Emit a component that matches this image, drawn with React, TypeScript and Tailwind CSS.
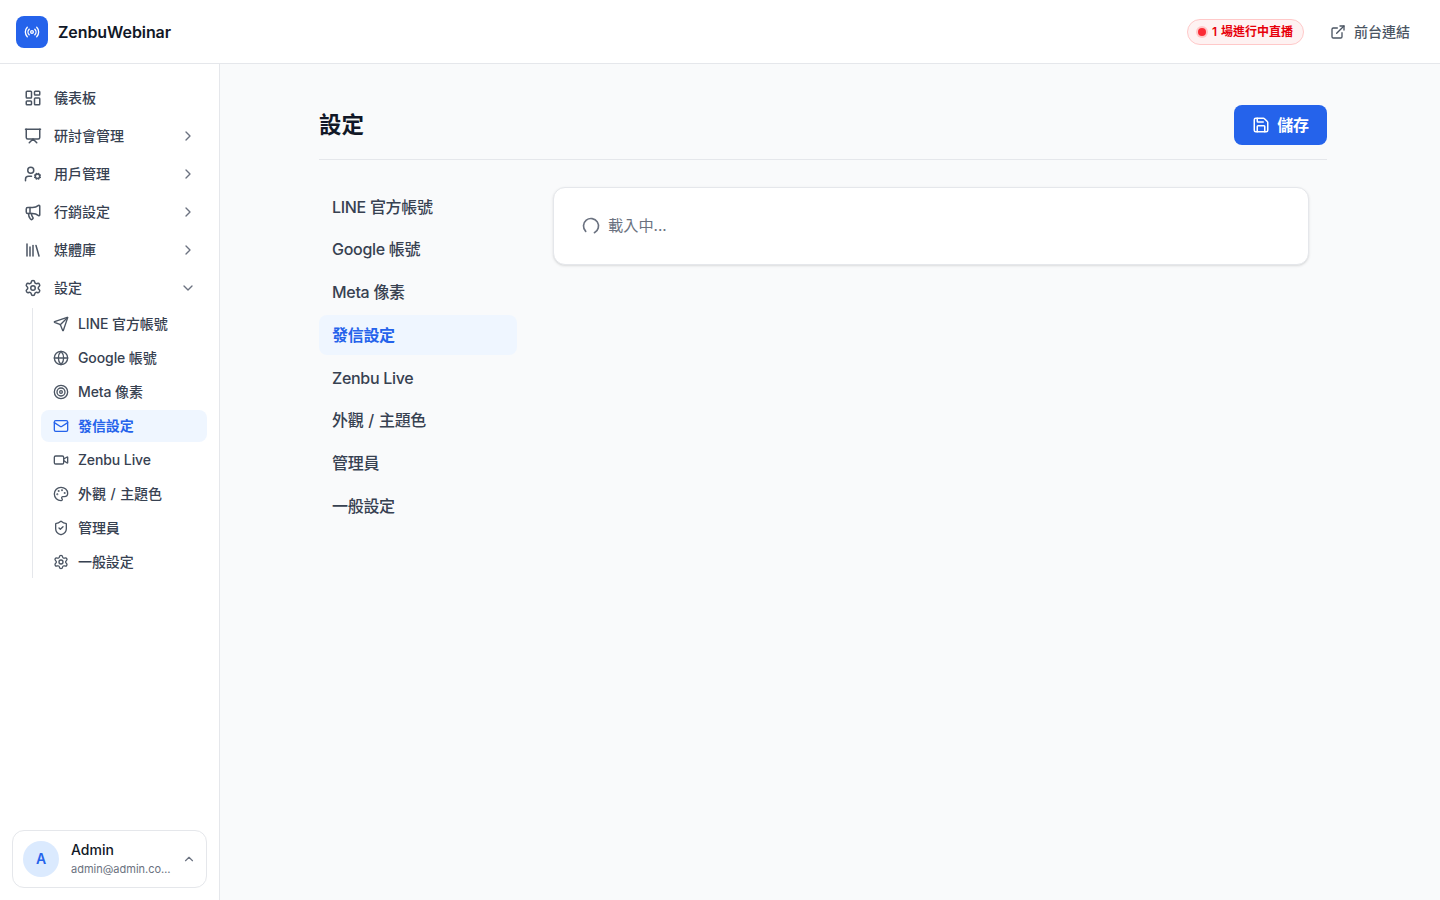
import React from "react";
import {
  LayoutDashboard, Presentation, UserCog, Megaphone, Library, Settings, Send, Globe, Target, Mail, Video, Palette,
  ShieldCheck, Radio, ExternalLink, Save, LoaderCircle, ChevronRight, ChevronDown, ChevronUp,
} from "lucide-react";

const font = "font-['Inter','Noto_Sans_CJK_TC',sans-serif]";

const mainNav = [
  { label: "儀表板", icon: LayoutDashboard },
  { label: "研討會管理", icon: Presentation, chev: "r" },
  { label: "用戶管理", icon: UserCog, chev: "r" },
  { label: "行銷設定", icon: Megaphone, chev: "r" },
  { label: "媒體庫", icon: Library, chev: "r" },
  { label: "設定", icon: Settings, chev: "d" },
];

const subNav = [
  { label: "LINE 官方帳號", icon: Send },
  { label: "Google 帳號", icon: Globe },
  { label: "Meta 像素", icon: Target },
  { label: "發信設定", icon: Mail, active: true },
  { label: "Zenbu Live", icon: Video },
  { label: "外觀 / 主題色", icon: Palette, wide: true },
  { label: "管理員", icon: ShieldCheck },
  { label: "一般設定", icon: Settings },
];

const tabs = [
  { label: "LINE 官方帳號" },
  { label: "Google 帳號" },
  { label: "Meta 像素" },
  { label: "發信設定", active: true },
  { label: "Zenbu Live" },
  { label: "外觀 / 主題色", wide: true },
  { label: "管理員" },
  { label: "一般設定" },
];

export default function App() {
  return (
    <div className={`${font} h-[900px] w-[1440px] overflow-hidden flex flex-col bg-[#f9fafb] text-[#111827]`}>
      <header className="h-16 shrink-0 bg-white border-b border-[#e5e7eb] flex items-center justify-between pl-4 pr-[30px]">
        <div className="flex items-center gap-2.5">
          <div className="w-8 h-8 rounded-lg bg-[#2563eb] flex items-center justify-center">
            <Radio size={16} className="text-white" strokeWidth={2} />
          </div>
          <span className="text-base font-semibold tracking-[-0.08px] text-[#111827]">ZenbuWebinar</span>
        </div>
        <div className="flex items-center gap-[26px]">
          <div className="h-[26px] w-[117px] rounded-full bg-[#fef2f2] border border-[#ffc9c9] flex items-center pl-[8px] gap-[4px]">
            <span className="w-3 h-3 rounded-full bg-[#ffc9c9] flex items-center justify-center">
              <span className="w-2 h-2 rounded-full bg-[#fb2c36]" />
            </span>
            <span className="text-xs font-semibold [word-spacing:1px] text-[#e7000b] whitespace-nowrap">1 場進行中直播</span>
          </div>
          <div className="flex items-center gap-2">
            <ExternalLink size={16} className="text-[#4b5563]" />
            <span className="text-sm font-medium text-[#4b5563]">前台連結</span>
          </div>
        </div>
      </header>
      <div className="flex-1 flex min-h-0">
        <aside className="w-[220px] shrink-0 bg-white border-r border-[#e5e7eb] flex flex-col justify-between">
          <nav className="pt-[15px] pl-3 pr-3">
            {mainNav.map((item) => (
              <div key={item.label} className="h-[38px] flex items-center pl-3 pr-[11px] text-sm font-medium text-[#374151]">
                <item.icon size={18} className="text-[#4b5563] shrink-0" />
                <span className="ml-3 flex-1">{item.label}</span>
                {item.chev === "r" && <ChevronRight size={16} className="text-[#6b7280]" />}
                {item.chev === "d" && <ChevronDown size={16} className="text-[#6b7280]" />}
              </div>
            ))}
            <div className="ml-5 mt-[1px] pl-2 border-l border-[#e5e7eb] h-[270px]">
              {subNav.map((item) => (
                <div
                  key={item.label}
                  className={`h-[32px] mb-[2px] rounded-lg flex items-center pl-3 text-sm ${
                    item.active ? "bg-[#eff6ff] text-[#2563eb] font-semibold" : "text-[#374151] font-medium"
                  }`}
                >
                  <item.icon size={16} className={item.active ? "text-[#2563eb]" : "text-[#4b5563]"} />
                  <span className={`ml-[9px] tracking-[-0.1px] ${item.wide ? "[word-spacing:1px]" : ""}`}>{item.label}</span>
                </div>
              ))}
            </div>
          </nav>
          <div className="px-3 pb-3">
            <div className="h-[58px] rounded-xl bg-white border border-[#e5e7eb] flex items-center pl-2.5 pr-2.5">
              <div className="w-9 h-9 rounded-full bg-[#dbeafe] text-[#2563eb] flex items-center justify-center text-sm font-semibold">A</div>
              <div className="ml-3 flex-1 min-w-0 -mt-[2px]">
                <div className="text-sm font-medium leading-5 text-[#111827]">Admin</div>
                <div className="text-[11px] leading-4 mt-[1px] text-[#6b7280] whitespace-nowrap">admin@admin.co…</div>
              </div>
              <ChevronUp size={14} className="text-[#6b7280]" />
            </div>
          </div>
        </aside>
        <main className="flex-1 min-w-0 pl-[99px] pt-[41px]">
          <div className="w-[1008px]">
            <div className="h-[55px] border-b border-[#e5e7eb] flex justify-between items-start">
              <h1 className="text-[22.5px] leading-10 font-semibold text-[#111827]">設定</h1>
              <button className="h-10 w-[93px] rounded-lg bg-[#2563eb] text-white flex items-center justify-center gap-[7px] text-base tracking-[-0.3px] font-semibold">
                <Save size={18} />
                <span>儲存</span>
              </button>
            </div>
            <div className="flex mt-[27px]">
              <div className="w-[198px] shrink-0 flex flex-col gap-[2.75px] -mt-[0.4px]">
                {tabs.map((t) => (
                  <div
                    key={t.label}
                    className={`h-10 rounded-lg flex items-center px-[13px] text-base tracking-[-0.3px] ${t.wide ? "[word-spacing:1px]" : ""} ${
                      t.active ? "bg-[#eff6ff] text-[#2563eb] font-semibold" : "text-[#374151] font-medium"
                    }`}
                  >
                    {t.label}
                  </div>
                ))}
              </div>
              <div className="ml-9 w-[756px] h-[78px] bg-white border border-[#e5e7eb] rounded-xl shadow-sm flex items-center pl-[27px] gap-[7px]">
                <LoaderCircle size={20} className="text-[#6b7280] rotate-[135deg]" />
                <span className="text-[15.2px] mt-[1px] text-[#6b7280]">載入中...</span>
              </div>
            </div>
          </div>
        </main>
      </div>
    </div>
  );
}
